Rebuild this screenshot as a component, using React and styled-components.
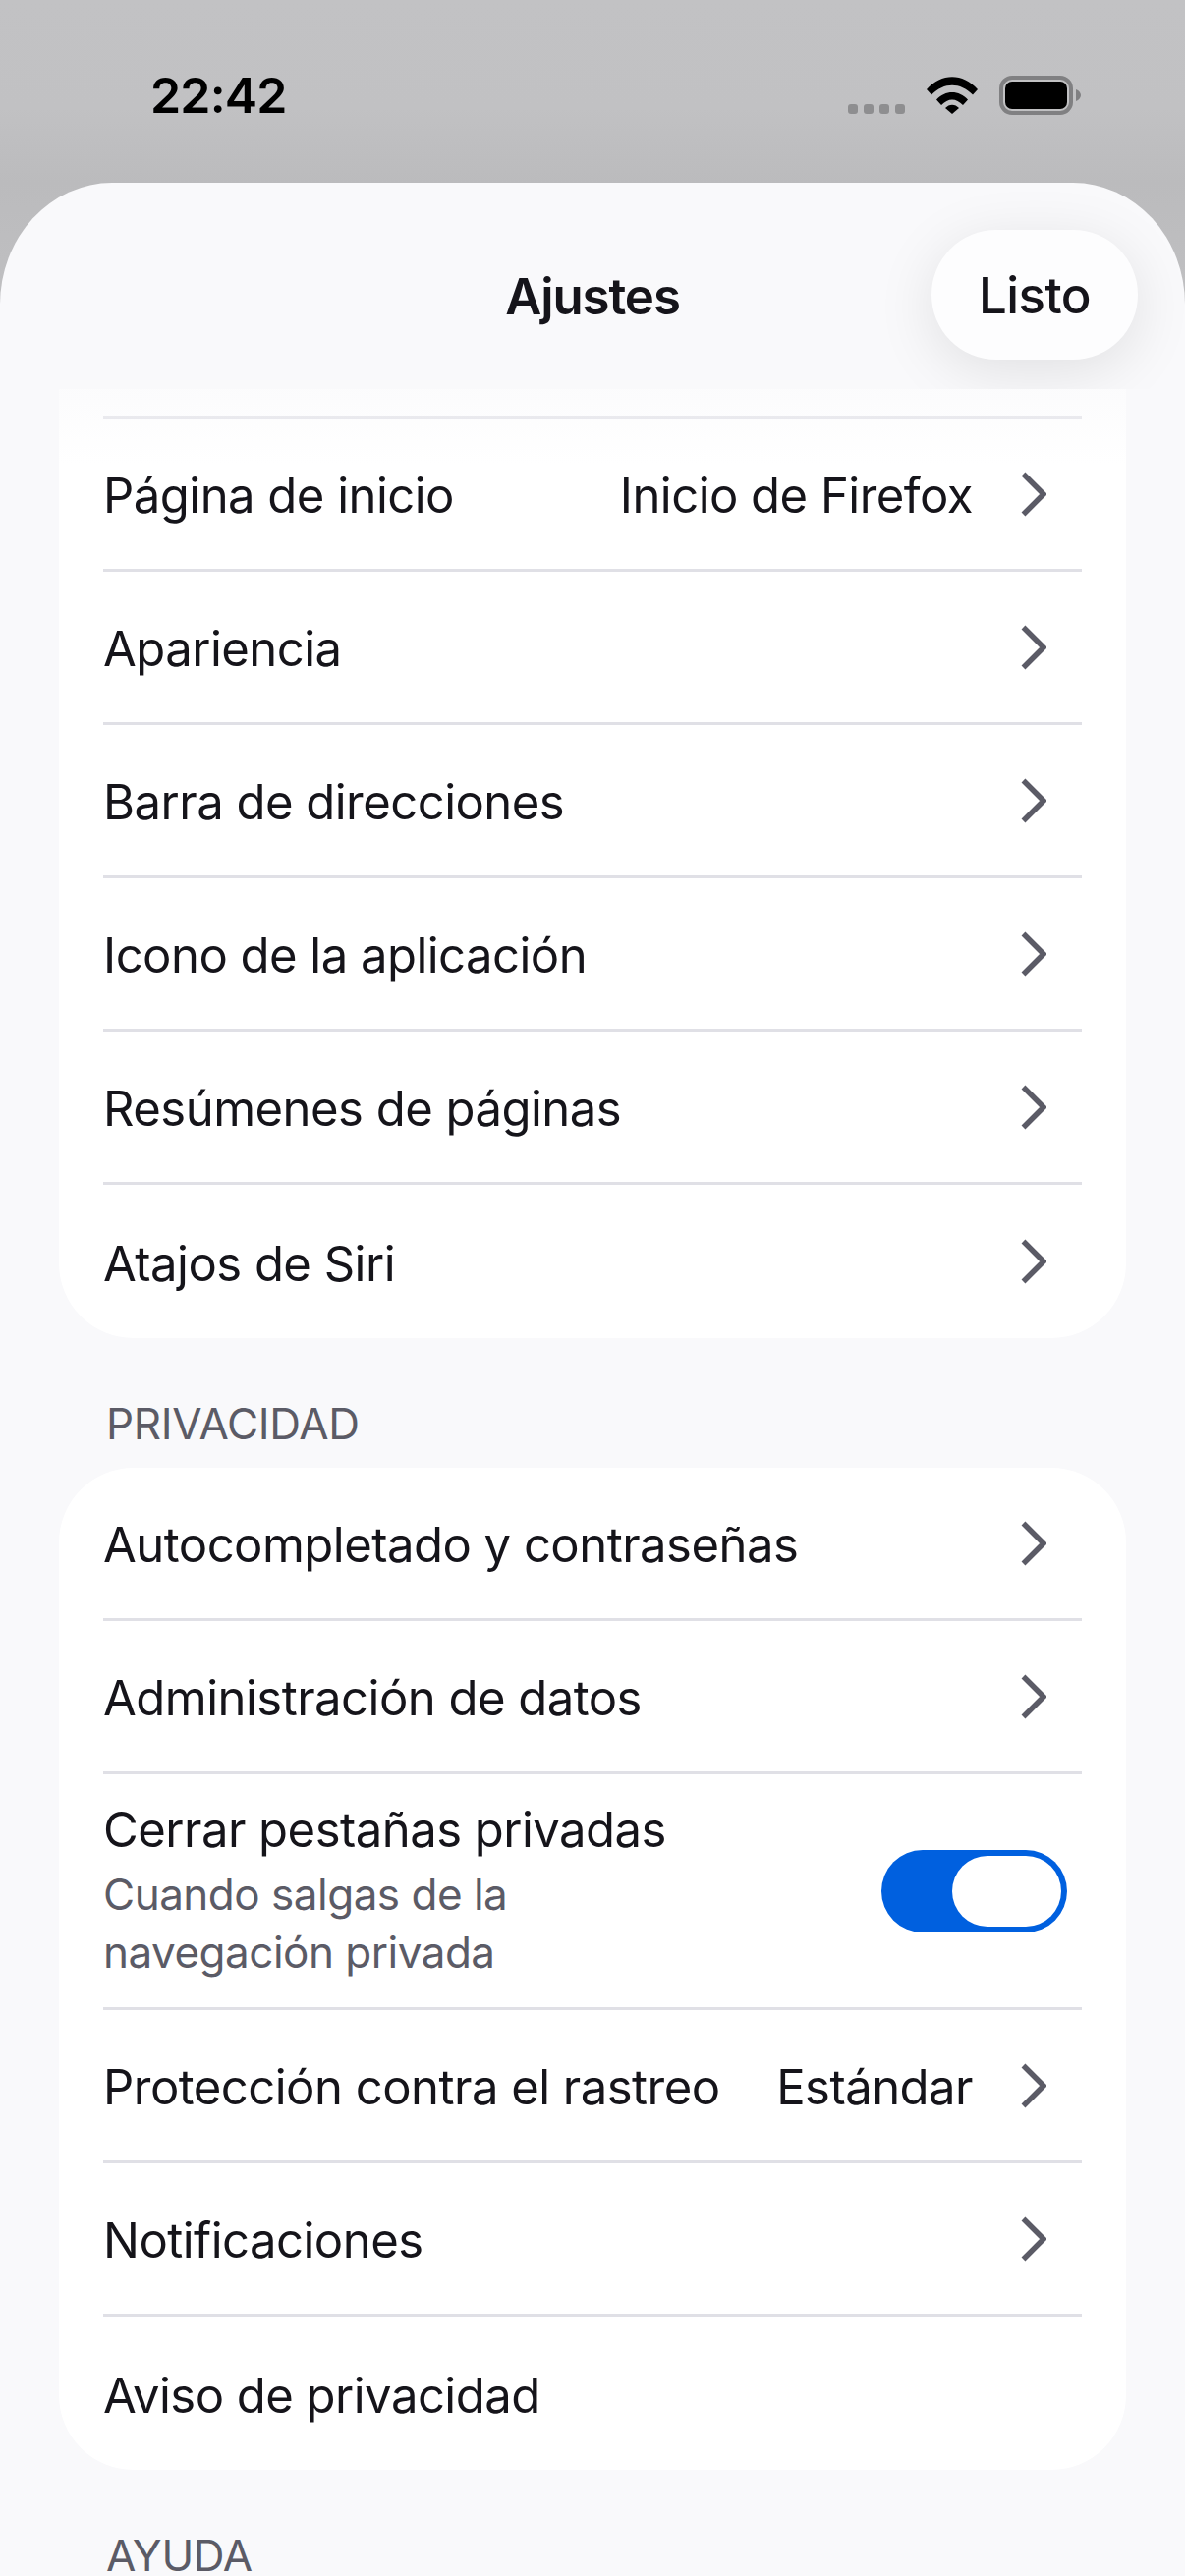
import styled, { createGlobalStyle } from 'styled-components';

const GlobalStyle = createGlobalStyle`
  html, body {
    margin: 0;
    padding: 0;
    background: #bfbfc1;
  }
  body {
    font-family: Inter, "Noto Sans", "Liberation Sans", sans-serif;
  }
`;

const Screen = styled.div`
  width: 1206px;
  height: 2622px;
  display: flex;
  flex-direction: column;
  overflow: hidden;
  background: linear-gradient(#c2c2c4, #c1c1c3 110px, #bbbbbd 186px, #c0c0c2 320px);
`;

const StatusBar = styled.div`
  height: 186px;
  flex: none;
  box-sizing: border-box;
  padding: 67px 106px 0 153px;
  display: flex;
  justify-content: space-between;
  align-items: flex-start;
`;

const Clock = styled.div`
  font-size: 50px;
  line-height: 60px;
  font-weight: 600;
  letter-spacing: -0.8px;
  color: #000;
`;

const StatusIcons = styled.div`
  display: flex;
  align-items: flex-end;
  margin-top: 10px;
`;

const Signal = styled.div`
  display: flex;
  gap: 6px;
  margin: 0 22px 1px 0;
`;

const SignalDot = styled.span`
  width: 10px;
  height: 10px;
  border-radius: 3px;
  background: #8e8e90;
`;

const Wifi = styled.svg`
  width: 52px;
  height: 38px;
  display: block;
  margin-right: 22px;
  margin-bottom: 1px;
`;

const Battery = styled.svg`
  width: 83px;
  height: 40px;
  display: block;
`;

const Sheet = styled.div`
  flex: 1;
  min-height: 0;
  display: flex;
  flex-direction: column;
  background: #f9f9fb;
  border-radius: 114px 114px 0 0 / 124px 124px 0 0;
  overflow: hidden;
`;

const Header = styled.header`
  height: 210px;
  flex: none;
  box-sizing: border-box;
  position: relative;
  overflow: hidden;
  display: flex;
  align-items: center;
  justify-content: center;
  padding-top: 20px;
`;

const Title = styled.h1`
  margin: 0;
  font-size: 51px;
  font-weight: 600;
  letter-spacing: -1.1px;
  color: #15141a;
`;

const DoneButton = styled.button`
  position: absolute;
  right: 48px;
  top: 48px;
  width: 210px;
  height: 132px;
  border: none;
  border-radius: 66px;
  background: #fdfdfe;
  box-shadow: 0 12px 60px rgba(0, 0, 0, 0.1);
  font-family: inherit;
  font-size: 51px;
  font-weight: 500;
  letter-spacing: -0.6px;
  color: #15141a;
  padding: 0;
`;

const Content = styled.div`
  flex: 1;
  min-height: 0;
  position: relative;
  padding: 0 60px;

  &::before {
    content: '';
    position: absolute;
    left: 0;
    right: 0;
    top: 0;
    height: 76px;
    background: linear-gradient(rgba(249, 249, 251, 0.6), rgba(249, 249, 251, 0));
  }
`;

const Card = styled.section`
  background: #fff;
  padding: ${(p) => (p.$clipped ? '27px 45px 0' : '0 45px')};
  border-radius: ${(p) => (p.$clipped ? '0 0 76px 76px' : '76px')};
`;

const TopRule = styled.div`
  height: 3px;
  background: #e0e0e6;
`;

const Row = styled.div`
  height: ${(p) => p.$height || 153}px;
  display: flex;
  align-items: center;
  justify-content: space-between;
  gap: 24px;
  padding-right: ${(p) => (p.$toggle ? 15 : 36)}px;
  border-bottom: ${(p) => (p.$last ? 'none' : '3px solid #e0e0e6')};
`;

const Label = styled.div`
  font-size: 49px;
  line-height: 60px;
  padding-top: ${(p) => (p.$stacked ? 0 : 5)}px;
  color: #15141a;
  letter-spacing: -0.52px;
  white-space: nowrap;
`;

const Sub = styled.div`
  font-size: 44px;
  line-height: 59px;
  margin-top: 6px;
  color: #5b5b66;
  letter-spacing: -0.5px;
  width: 480px;
`;

const Trailing = styled.div`
  display: flex;
  align-items: center;
  gap: 49px;
`;

const Value = styled.span`
  font-size: 49px;
  line-height: 60px;
  padding-top: 5px;
  color: #15141a;
  letter-spacing: -0.52px;
`;

const Chevron = styled.svg`
  width: 26px;
  height: 46px;
  display: block;
`;

const Toggle = styled.div`
  width: 189px;
  height: 84px;
  flex: none;
  box-sizing: border-box;
  padding: 6px;
  display: flex;
  justify-content: flex-end;
  border-radius: 42px;
  background: #0060df;
`;

const Thumb = styled.div`
  width: 111px;
  height: 72px;
  border-radius: 36px;
  background: #fff;
`;

const SectionLabel = styled.h2`
  margin: 0;
  padding: 65px 0 0 48px;
  height: 67px;
  box-sizing: content-box;
  font-size: 44px;
  line-height: 44px;
  font-weight: 400;
  color: #5b5b66;
  letter-spacing: -0.3px;
`;

function ChevronIcon() {
  return (
    <Chevron viewBox="0 0 26 46">
      <path d="M2.5 2.5 L23 23 L2.5 43.5" fill="none" stroke="#5b5b66" strokeWidth="5.5" />
    </Chevron>
  );
}

function SettingRow({ label, value, last, chevron = true }) {
  return (
    <Row $last={last} $height={last ? 156 : undefined}>
      <Label>{label}</Label>
      <Trailing>
        {value && <Value>{value}</Value>}
        {chevron && <ChevronIcon />}
      </Trailing>
    </Row>
  );
}

export default function App() {
  return (
    <Screen>
      <GlobalStyle />
      <StatusBar>
        <Clock>22:42</Clock>
        <StatusIcons>
          <Signal>
            <SignalDot />
            <SignalDot />
            <SignalDot />
            <SignalDot />
          </Signal>
          <Wifi viewBox="0 0 52 38">
            <path d="M0 13 C15 -4 37 -4 52 13 L47 18.5 C34 5.5 18 5.5 5 18.5 Z" fill="#000" />
            <path d="M10 23.5 C19 13.5 33 13.5 42 23.5 L37 29 C30 21.5 22 21.5 15 29 Z" fill="#000" />
            <path d="M19 32 C23 27.5 29 27.5 33 32 L26 38 Z" fill="#000" />
          </Wifi>
          <Battery viewBox="0 0 83 40">
            <rect x="2" y="2" width="71" height="36" rx="11" fill="none" stroke="#808082" strokeWidth="4" />
            <rect x="6" y="6" width="63" height="28" rx="7" fill="#000" />
            <path d="M78 14 C81 15 83 17.5 83 20 C83 22.5 81 25 78 26 Z" fill="#808082" />
          </Battery>
        </StatusIcons>
      </StatusBar>

      <Sheet>
        <Header>
          <Title>Ajustes</Title>
          <DoneButton>Listo</DoneButton>
        </Header>
        <Content>
          <Card $clipped>
            <TopRule />
            <SettingRow label="Página de inicio" value="Inicio de Firefox" />
            <SettingRow label="Apariencia" />
            <SettingRow label="Barra de direcciones" />
            <SettingRow label="Icono de la aplicación" />
            <SettingRow label="Resúmenes de páginas" />
            <SettingRow label="Atajos de Siri" last />
          </Card>

          <SectionLabel>PRIVACIDAD</SectionLabel>
          <Card>
            <SettingRow label="Autocompletado y contraseñas" />
            <SettingRow label="Administración de datos" />
            <Row $height={237} $toggle>
              <div>
                <Label $stacked>Cerrar pestañas privadas</Label>
                <Sub>Cuando salgas de la navegación privada</Sub>
              </div>
              <Toggle>
                <Thumb />
              </Toggle>
            </Row>
            <SettingRow label="Protección contra el rastreo" value="Estándar" />
            <SettingRow label="Notificaciones" />
            <SettingRow label="Aviso de privacidad" chevron={false} last />
          </Card>

          <SectionLabel>AYUDA</SectionLabel>
        </Content>
      </Sheet>
    </Screen>
  );
}
